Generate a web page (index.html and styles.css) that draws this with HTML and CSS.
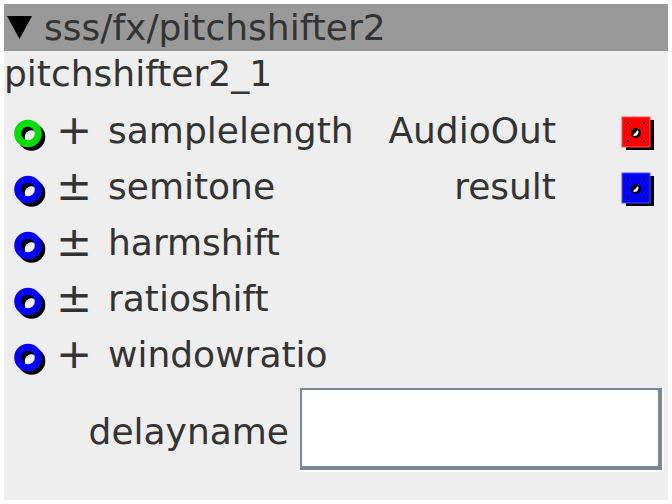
FILE: index.html
```html
<!DOCTYPE html>
<html lang="en">
<head>
  <meta charset="UTF-8" />
  <title>sss/fx/pitchshifter2</title>
  <link rel="stylesheet" href="styles.css">
</head>
<body>

<div class="node">
  <div class="node-head">
    <svg class="toggle" width="25" height="24" viewBox="0 0 25 24"><polygon points="0,0 25,0 12.5,23" fill="#000"/></svg>
    <span class="node-path">sss/fx/pitchshifter2</span>
  </div>
  <div class="node-name">pitchshifter2_1</div>

  <div class="port-row">
    <svg class="in-port" width="42" height="56" viewBox="0 0 42 56">
      <circle cx="17.5" cy="34" r="10.3" fill="none" stroke="#000" stroke-width="7"/>
      <circle cx="14" cy="30.5" r="10.3" fill="none" stroke="#00dd00" stroke-width="7"/>
    </svg>
    <span class="sign"><span>+</span></span>
    <span class="port-name">samplelength</span>
    <span class="out-name">AudioOut</span>
    <svg class="out-port" width="36" height="56" viewBox="0 0 36 56">
      <rect x="6" y="17" width="28" height="30" fill="#000"/>
      <rect x="2" y="14" width="28" height="30" fill="#ff0000" stroke="#ff5050" stroke-width="1"/>
      <circle cx="16" cy="30" r="5" fill="#000"/>
      <path d="M13 32 L18 27 A4 4 0 0 1 14 33 Z" fill="#fff"/>
      <rect x="7" y="19" width="2" height="2" fill="#000"/>
      <rect x="23" y="19" width="2" height="2" fill="#000"/>
      <rect x="7" y="37" width="2" height="2" fill="#000"/>
      <rect x="23" y="37" width="2" height="2" fill="#000"/>
    </svg>
  </div>

  <div class="port-row">
    <svg class="in-port" width="42" height="56" viewBox="0 0 42 56">
      <circle cx="17.5" cy="34" r="10.3" fill="none" stroke="#000" stroke-width="7"/>
      <circle cx="14" cy="30.5" r="10.3" fill="none" stroke="#0000ff" stroke-width="7"/>
    </svg>
    <span class="sign"><span>±</span></span>
    <span class="port-name">semitone</span>
    <span class="out-name">result</span>
    <svg class="out-port" width="36" height="56" viewBox="0 0 36 56">
      <rect x="6" y="17" width="28" height="30" fill="#000"/>
      <rect x="2" y="14" width="28" height="30" fill="#0000ff" stroke="#5050ff" stroke-width="1"/>
      <circle cx="16" cy="30" r="5" fill="#000"/>
      <path d="M13 32 L18 27 A4 4 0 0 1 14 33 Z" fill="#fff"/>
      <rect x="7" y="19" width="2" height="2" fill="#000"/>
      <rect x="23" y="19" width="2" height="2" fill="#000"/>
      <rect x="7" y="37" width="2" height="2" fill="#000"/>
      <rect x="23" y="37" width="2" height="2" fill="#000"/>
    </svg>
  </div>

  <div class="port-row">
    <svg class="in-port" width="42" height="56" viewBox="0 0 42 56">
      <circle cx="17.5" cy="34" r="10.3" fill="none" stroke="#000" stroke-width="7"/>
      <circle cx="14" cy="30.5" r="10.3" fill="none" stroke="#0000ff" stroke-width="7"/>
    </svg>
    <span class="sign"><span>±</span></span>
    <span class="port-name">harmshift</span>
  </div>

  <div class="port-row">
    <svg class="in-port" width="42" height="56" viewBox="0 0 42 56">
      <circle cx="17.5" cy="34" r="10.3" fill="none" stroke="#000" stroke-width="7"/>
      <circle cx="14" cy="30.5" r="10.3" fill="none" stroke="#0000ff" stroke-width="7"/>
    </svg>
    <span class="sign"><span>±</span></span>
    <span class="port-name">ratioshift</span>
  </div>

  <div class="port-row">
    <svg class="in-port" width="42" height="56" viewBox="0 0 42 56">
      <circle cx="17.5" cy="34" r="10.3" fill="none" stroke="#000" stroke-width="7"/>
      <circle cx="14" cy="30.5" r="10.3" fill="none" stroke="#0000ff" stroke-width="7"/>
    </svg>
    <span class="sign"><span>+</span></span>
    <span class="port-name">windowratio</span>
  </div>

  <div class="param-row">
    <label for="delayname">delayname</label>
    <span class="field-frame"><input type="text" id="delayname" name="delayname" /></span>
  </div>
</div>

</body>
</html>
```

FILE: styles.css
```css
body {
  margin: 4px;
  background: #fff;
  font-family: "DejaVu Sans", sans-serif;
  font-size: 36px;
  color: #333;
}

.node {
  background: #eeeeee;
  padding-bottom: 28px;
}

.node-head {
  height: 47px;
  background: #999999;
  display: flex;
  align-items: center;
  padding-left: 3px;
  line-height: 47px;
}

.toggle {
  display: block;
  margin-right: 12px;
}

.node-name {
  line-height: 45px;
  margin-bottom: 7px;
}

.port-row {
  display: flex;
  align-items: center;
  height: 56px;
  line-height: 56px;
  padding-left: 10px;
  padding-right: 14px;
}

.in-port,
.out-port {
  display: block;
  flex: none;
}

.sign {
  width: 52px;
  flex: none;
}

.sign span {
  display: inline-block;
  transform: scale(1.2, 1.15);
  transform-origin: left 60%;
}

.port-name {
  flex: 1;
}

.out-name {
  margin-right: 64px;
}

.out-port {
  margin-right: -2px;
}

.param-row {
  display: flex;
  justify-content: flex-end;
  align-items: center;
  margin-top: 3px;
  padding-right: 4px;
  gap: 9px;
}

.param-row label {
  padding-top: 4px;
}

.field-frame {
  display: block;
  border: 2px solid;
  border-color: transparent #fff #fff transparent;
}

input {
  display: block;
  box-sizing: border-box;
  width: 362px;
  height: 82px;
  margin: 0;
  padding: 0 6px;
  background: #fff;
  border-style: solid;
  border-width: 2px 4px 4px 2px;
  border-color: #7b8794;
  font-family: "DejaVu Sans", sans-serif;
  font-size: 36px;
}
```
